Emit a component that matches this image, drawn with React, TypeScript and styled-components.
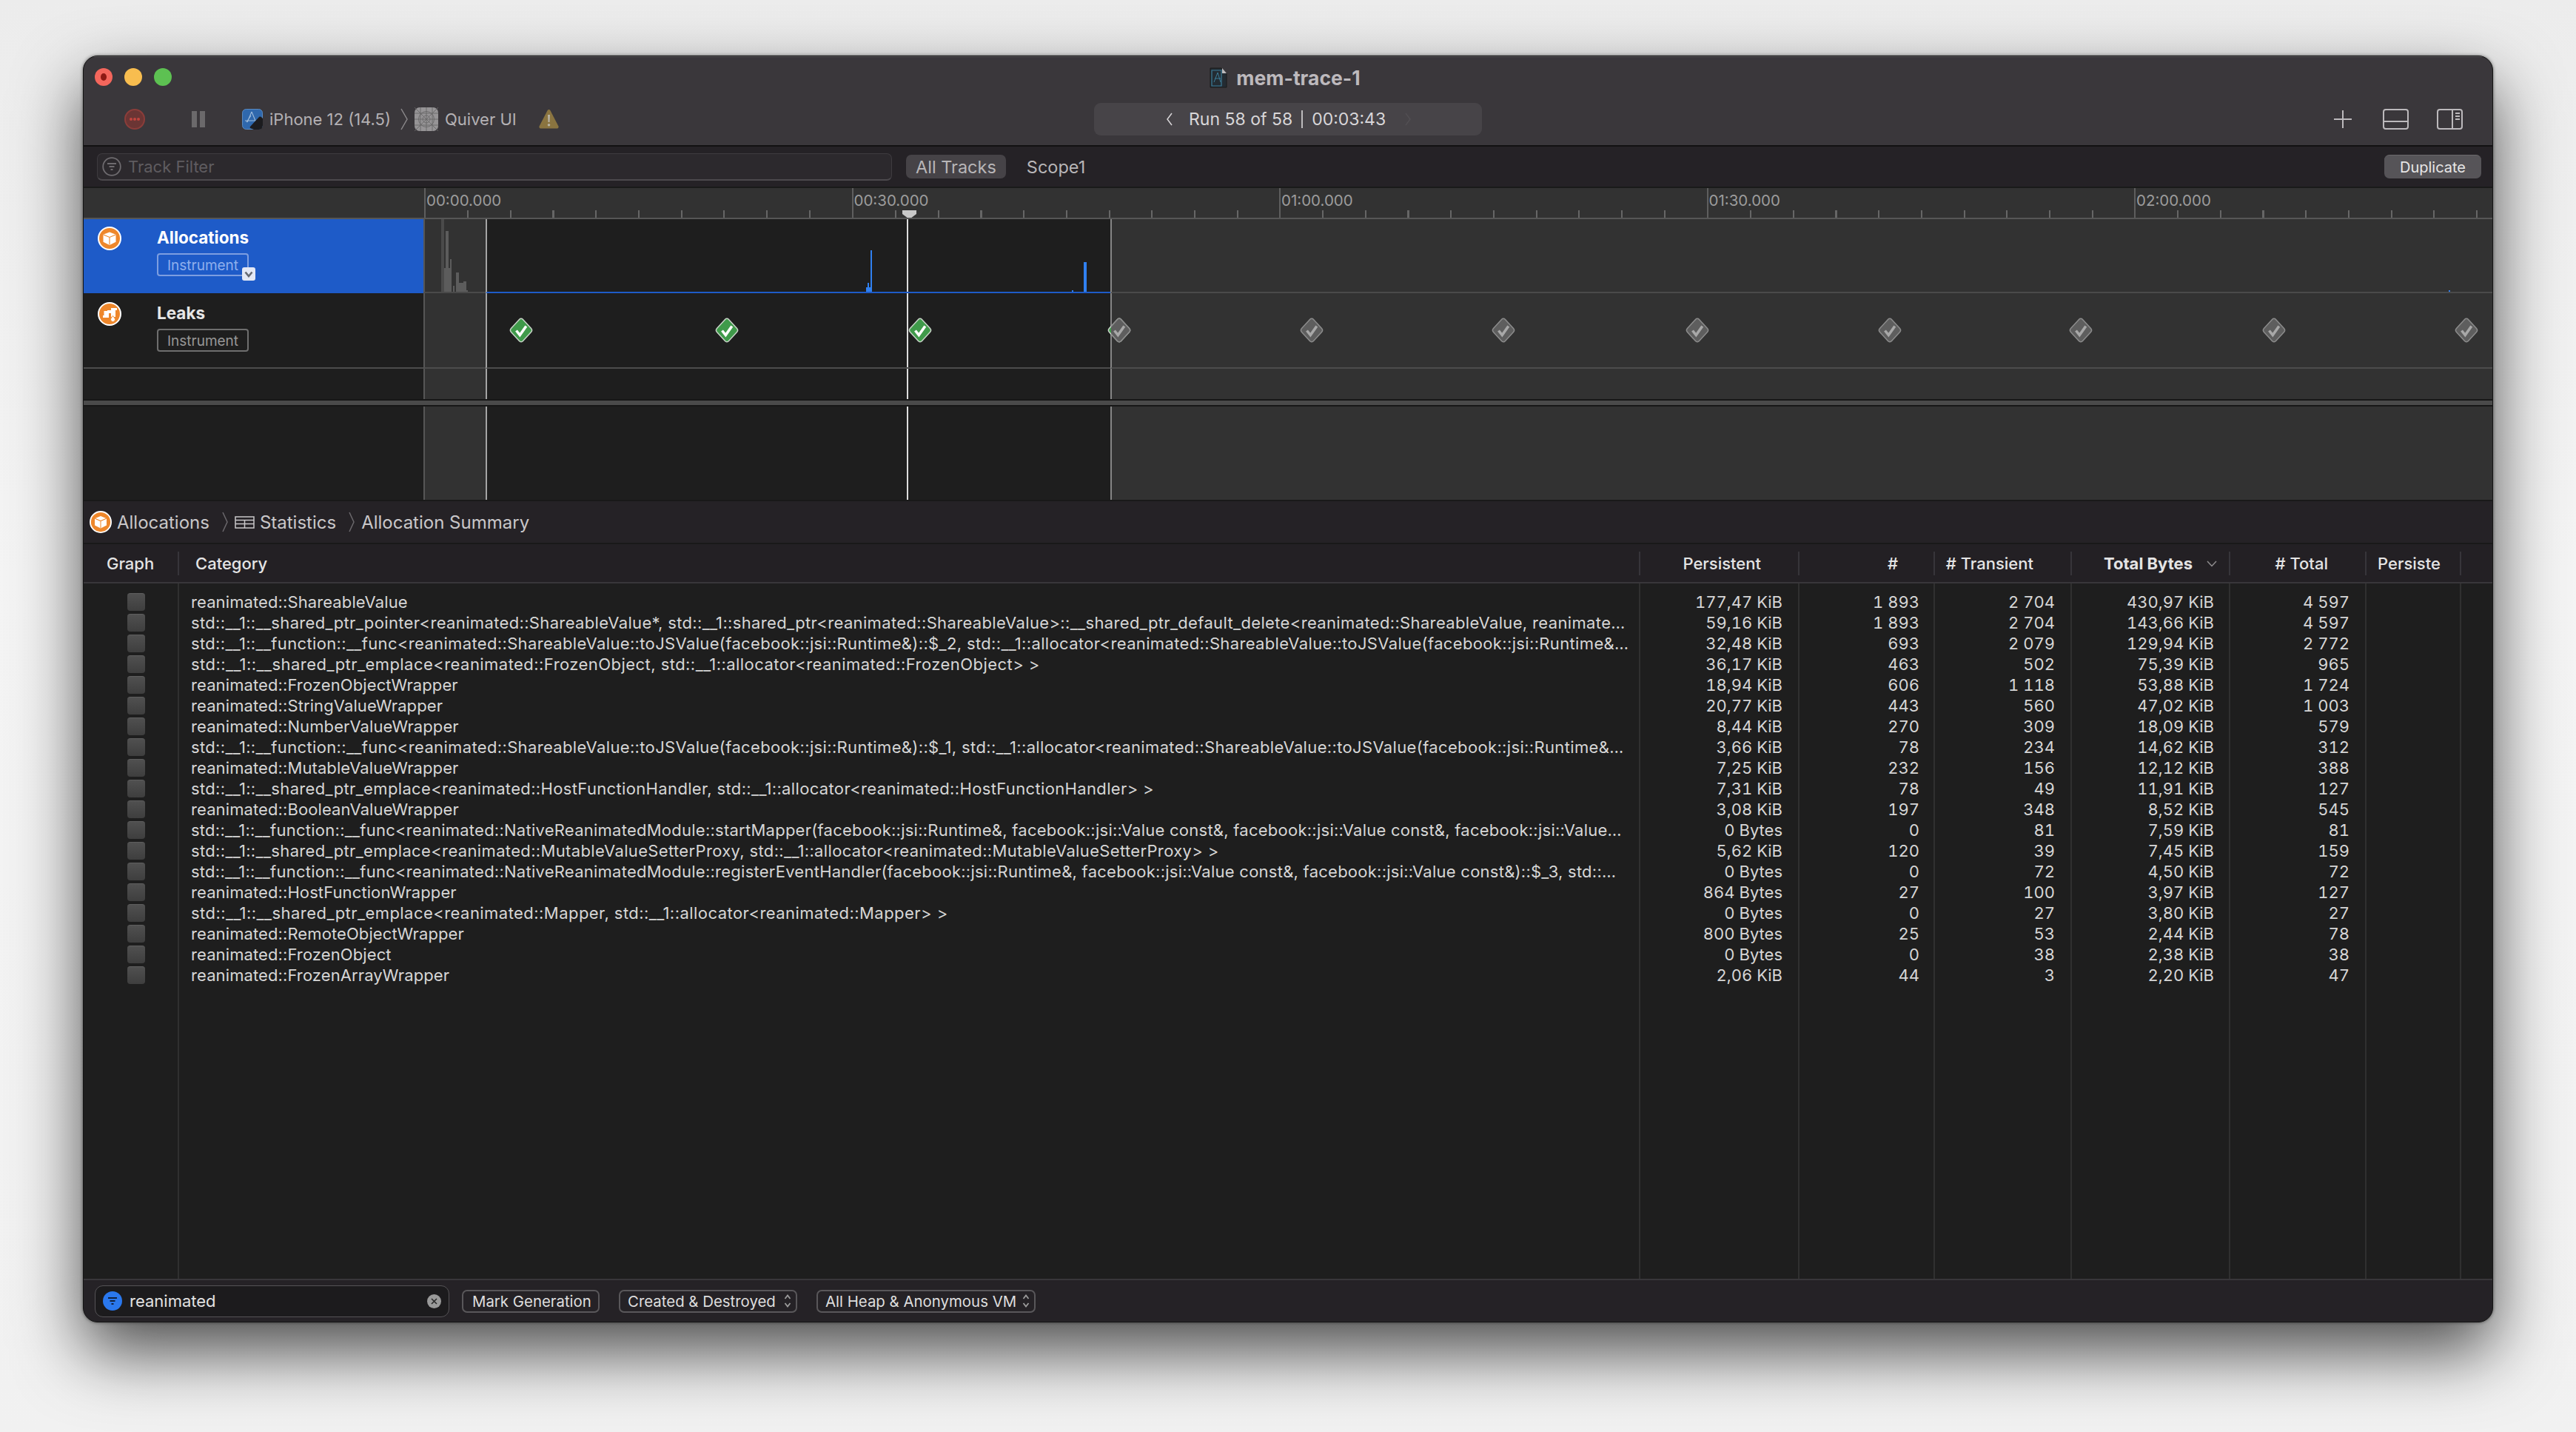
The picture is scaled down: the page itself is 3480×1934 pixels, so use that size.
import React from 'react';
import styled, { createGlobalStyle } from 'styled-components';

const GlobalStyle = createGlobalStyle`
  html, body {
    margin: 0;
    width: 3480px;
    height: 1934px;
    overflow: hidden;
    background: #f1f1f1;
    font-family: Inter, "Liberation Sans", sans-serif;
  }
  * { box-sizing: border-box; }
`;

// --- Window shell ---

const Page = styled.div`
  width: 3480px;
  height: 1934px;
  padding: 75px 112px;
  background: linear-gradient(#ececec, #f4f4f4 40%, #f1f1f1);
`;

const Window = styled.div`
  width: 3256px;
  height: 1711px;
  display: flex;
  flex-direction: column;
  border: 1px solid #141414;
  border-radius: 20px;
  overflow: hidden;
  background: #1e1e1e;
  box-shadow: 0 40px 90px rgba(0, 0, 0, 0.68), 0 0 4px rgba(0, 0, 0, 0.5);
  color: #d6d6d6;
  font-size: 22px;
`;

const TitleArea = styled.div`
  height: 122px;
  flex: none;
  background: #3a373b;
  border-bottom: 2px solid #121112;
  box-shadow: inset 0 1px 0 #5a585b;
`;

const TitleRow = styled.div`
  height: 57px;
  position: relative;
  display: flex;
  align-items: center;
  justify-content: center;
  gap: 12px;
  padding: 1px 8px 0 0;
`;

const Lights = styled.div`
  position: absolute;
  left: 15px;
  top: 16px;
  display: flex;
  gap: 16px;
`;

const Light = styled.span<{ $c: string }>`
  width: 24px;
  height: 24px;
  border-radius: 50%;
  background: ${(p) => p.$c};
  display: flex;
  align-items: center;
  justify-content: center;
`;

const LightDot = styled.span`
  width: 8px;
  height: 10px;
  border-radius: 50%;
  background: #8e1a14;
`;

const WindowTitle = styled.span`
  font-size: 26.5px;
  font-weight: 700;
  color: #bdb9bd;
`;

const Toolbar = styled.div`
  height: 56px;
  display: grid;
  grid-template-columns: 1fr 524px 1fr;
  align-items: center;
`;

const ToolLeft = styled.div`
  display: flex;
  align-items: center;
  padding-left: 55px;
  color: #b4b1b4;
`;

const ToolRight = styled.div`
  display: flex;
  align-items: center;
  justify-content: flex-end;
  padding-right: 40px;
  gap: 38px;
`;

const PlusWrap = styled.span`
  display: flex;
  margin-right: 4px;
`;

const PauseBars = styled.span`
  width: 18px;
  height: 22px;
  flex: none;
  margin: 0 50px 0 63px;
  border-left: 7px solid #6b696b;
  border-right: 7px solid #6b696b;
`;

const DeviceLabel = styled.span`
  margin-left: 9px;
  font-size: 22px;
  white-space: nowrap;
`;

const DeviceChevron = styled.span`
  display: flex;
  margin-left: 13px;
`;

const RunPill = styled.div`
  height: 44px;
  border-radius: 9px;
  background: #474448;
  display: flex;
  align-items: center;
  padding-left: 98px;
  color: #d8d6d8;
  font-size: 23px;
  white-space: nowrap;
`;

const RunText = styled.span`
  margin-left: 22px;
`;

const RunDivider = styled.span`
  width: 2px;
  height: 24px;
  background: #bdbbbd;
  margin: 0 12px;
`;

const RunNext = styled.span`
  margin-left: 26px;
  display: flex;
`;

// --- Filter strip ---

const FilterBar = styled.div`
  height: 56px;
  flex: none;
  display: flex;
  align-items: center;
  padding: 0 15px 0 18px;
  background: #252226;
  border-bottom: 2px solid #1a1a1a;
`;

const TrackField = styled.div`
  width: 1074px;
  height: 37px;
  display: flex;
  align-items: center;
  gap: 9px;
  padding-left: 6px;
  border: 1px solid #3e3b3f;
  border-bottom: 2px solid #4c494d;
  border-radius: 7px;
  background: #2c292d;
  color: #5f5c60;
  font-size: 22px;
`;

const ScopeTab = styled.span<{ $on?: boolean }>`
  height: 32px;
  padding: 0 13px;
  margin-left: ${(p) => (p.$on ? '19px' : '15px')};
  display: flex;
  align-items: center;
  border-radius: 7px;
  font-size: 23.5px;
  color: #b8b6b8;
  background: ${(p) => (p.$on ? '#464347' : 'transparent')};
`;

const DuplicateButton = styled.button`
  margin-left: auto;
  width: 131px;
  height: 32px;
  border: 0;
  border-top: 1px solid #6a686b;
  border-radius: 7px;
  background: #565458;
  color: #e6e6e6;
  font: inherit;
  font-size: 20px;
  padding: 0;
`;

// --- Timeline ---

const RulerRow = styled.div`
  height: 42px;
  flex: none;
  display: flex;
  position: relative;
  background: #323232;
  border-bottom: 2px solid #565656;
`;

const RulerSpacer = styled.div`
  width: 460px;
  flex: none;
`;

const RulerCell = styled.div`
  width: 577.5px;
  flex: none;
  position: relative;
  border-left: 2px solid #5e5e5e;
  padding: 5px 0 0 1px;
  font-size: 20.5px;
  line-height: 24px;
  color: #9c9c9c;
  &::after {
    content: '';
    position: absolute;
    left: 56px;
    right: 0;
    bottom: 0;
    height: 10px;
    background: repeating-linear-gradient(to right, #666 0 2px, transparent 2px 57.75px);
  }
`;

const PlayheadHandle = styled.span`
  position: absolute;
  left: 1106px;
  bottom: 0;
  width: 19px;
  height: 10px;
  background: #c8c8c8;
  clip-path: polygon(0 0, 100% 0, 100% 50%, 65% 100%, 35% 100%, 0 50%);
`;

const TrackRow = styled.div<{ $h: number }>`
  height: ${(p) => p.$h}px;
  flex: none;
  display: flex;
`;

const TrackLabel = styled.div<{ $selected?: boolean; $top?: number; $rule?: boolean }>`
  width: 459px;
  flex: none;
  display: flex;
  gap: 48px;
  padding: ${(p) => p.$top ?? 0}px 0 0 19px;
  background: ${(p) => (p.$selected ? '#1e5bc8' : '#1e1e1e')};
  border-bottom: ${(p) => (p.$rule ? '2px solid #4c4c4c' : '0')};
`;

const TrackText = styled.div`
  display: flex;
  flex-direction: column;
  gap: 8px;
  align-items: flex-start;
`;

const TrackName = styled.span<{ $selected?: boolean }>`
  height: 28px;
  line-height: 29px;
  font-size: 22.5px;
  font-weight: 700;
  color: ${(p) => (p.$selected ? '#ffffff' : '#e6e6e6')};
`;

const InstrumentBadge = styled.span<{ $selected?: boolean }>`
  width: 124px;
  height: 31px;
  position: relative;
  display: flex;
  align-items: center;
  justify-content: center;
  padding-top: 1px;
  border: 2px solid ${(p) => (p.$selected ? '#7d9ee0' : '#6e6e6e')};
  border-radius: 4px;
  font-size: 19px;
  color: ${(p) => (p.$selected ? '#8eafec' : '#969696')};
`;

const BadgeMenu = styled.span`
  position: absolute;
  right: -11px;
  bottom: -8px;
  width: 18px;
  height: 18px;
  border-radius: 3px;
  background: #e3e8f5;
  display: flex;
  align-items: center;
  justify-content: center;
`;

const Lane = styled.div`
  flex: 1;
  display: flex;
  position: relative;
  min-width: 0;
`;

const IdleBand = styled.div<{ $w?: number; $line: string; $rule?: string }>`
  width: ${(p) => (p.$w ? `${p.$w}px` : 'auto')};
  flex: ${(p) => (p.$w ? 'none' : '1')};
  background: #323232;
  border-left: 2px solid ${(p) => p.$line};
  border-bottom: ${(p) => (p.$rule ? `2px solid ${p.$rule}` : '0')};
`;

const ActiveBand = styled.div<{ $rule?: string }>`
  width: 844px;
  flex: none;
  position: relative;
  background: #1e1e1e;
  border-left: 2px solid #a4a4a4;
  border-bottom: ${(p) => (p.$rule ? `2px solid ${p.$rule}` : '0')};
`;

const Playhead = styled.span`
  position: absolute;
  left: 567px;
  top: 0;
  bottom: 0;
  width: 2px;
  background: #dddddd;
`;

const LaneChart = styled.svg`
  position: absolute;
  left: 1px;
  top: 0;
`;

const Diamond = styled.svg<{ $x: number; $clip?: boolean }>`
  position: absolute;
  left: ${(p) => p.$x - 572 - 16}px;
  top: 33px;
  ${(p) => (p.$clip ? 'clip-path: inset(0 0 0 5px);' : '')}
`;

const Splitter = styled.div`
  height: 10px;
  flex: none;
  background: #4a4a4a;
  border-top: 2px solid #171717;
  border-bottom: 2px solid #171717;
`;

// --- Detail pane ---

const Breadcrumbs = styled.div`
  height: 58px;
  flex: none;
  display: flex;
  align-items: center;
  padding-left: 8px;
  background: #252226;
  border-top: 2px solid #191919;
  font-size: 24px;
  color: #c9c7c9;
  white-space: nowrap;
`;

const Crumb = styled.span<{ $flush?: boolean }>`
  margin-left: ${(p) => (p.$flush ? 0 : 7)}px;
`;

const CrumbChevron = styled.span`
  display: flex;
  margin: 0 9px 0 17px;
`;

const TableHead = styled.div`
  height: 55px;
  flex: none;
  display: flex;
  align-items: center;
  background: #232024;
  border-top: 2px solid #191919;
  border-bottom: 2px solid #38363a;
  font-size: 22px;
  color: #e4e4e4;
`;

const HeadCell = styled.div<{ $w: number; $align?: string; $pad?: number; $bold?: boolean; $first?: boolean }>`
  width: ${(p) => p.$w}px;
  flex: none;
  height: 32px;
  line-height: 32px;
  position: relative;
  white-space: nowrap;
  text-align: ${(p) => p.$align ?? 'right'};
  padding: ${(p) => (p.$align === 'left' ? `0 0 0 ${p.$pad ?? 0}px` : `0 ${p.$pad ?? 0}px 0 0`)};
  border-left: ${(p) => (p.$first ? '0' : '2px solid #37353a')};
  font-weight: ${(p) => (p.$bold ? 700 : 500)};
`;

const SortMark = styled.svg`
  position: absolute;
  right: 16px;
  top: 12px;
`;

const TableBody = styled.div`
  flex: 1;
  min-height: 0;
  display: flex;
  background: #1e1e1e;
`;

const Column = styled.div<{ $w?: number; $first?: boolean }>`
  width: ${(p) => (p.$w ? `${p.$w}px` : 'auto')};
  flex: ${(p) => (p.$w ? 'none' : '1')};
  padding-top: 11px;
  border-left: ${(p) => (p.$first ? '0' : '2px solid #303030')};
`;

const GraphCell = styled.div`
  height: 28px;
  display: flex;
  align-items: center;
  padding-left: 59px;
`;

const GraphSwatch = styled.span`
  width: 24px;
  height: 24px;
  border-radius: 4px;
  border-top: 1px solid #5e5e5e;
  background: linear-gradient(#505050, #3e3e3e);
`;

const NameCell = styled.div<{ $track: number }>`
  height: 28px;
  line-height: 29px;
  padding-left: 16px;
  white-space: nowrap;
  overflow: hidden;
  font-size: 22px;
  letter-spacing: ${(p) => p.$track}px;
`;

const ValueCell = styled.div<{ $pad: number }>`
  height: 28px;
  line-height: 29px;
  text-align: right;
  white-space: nowrap;
  padding-right: ${(p) => p.$pad}px;
  font-size: 22px;
  font-variant-numeric: tabular-nums;
`;

// --- Bottom strip ---

const BottomBar = styled.div`
  height: 58px;
  flex: none;
  display: flex;
  align-items: center;
  padding: 0 0 0 15px;
  background: #252226;
  border-top: 2px solid #38363a;
`;

const SearchField = styled.div`
  width: 479px;
  height: 43px;
  display: flex;
  align-items: center;
  gap: 10px;
  padding: 0 10px;
  border: 1px solid #555356;
  border-radius: 11px;
  background: #1c1b1d;
  color: #e2e2e2;
  font-size: 22px;
`;

const ClearMark = styled.span`
  margin-left: auto;
  width: 19px;
  height: 19px;
  border-radius: 50%;
  background: #9a9a9a;
  display: flex;
  align-items: center;
  justify-content: center;
`;

const BarButton = styled.div<{ $w: number; $gap: number; $pad?: number }>`
  width: ${(p) => p.$w}px;
  height: 31px;
  margin-left: ${(p) => p.$gap}px;
  display: flex;
  align-items: center;
  justify-content: space-between;
  padding: 0 6px 0 ${(p) => p.$pad ?? 10}px;
  border: 2px solid #59575a;
  border-radius: 7px;
  font-size: 20.4px;
  color: #dedede;
  white-space: nowrap;
`;

// --- Drawings ---

const Glyph = styled.svg<{ $ml?: number }>`
  flex: none;
  margin-left: ${(p) => p.$ml ?? 0}px;
`;

const OrangeBadge: React.FC<{ kind: 'cube' | 'leak'; size?: number }> = ({ kind, size = 32 }) => (
  <Glyph width={size} height={size} viewBox="0 0 32 32">
    <circle cx="16" cy="16" r="15" fill="#ee872b" stroke="#fff" strokeWidth="2" />
    {kind === 'cube' ? (
      <>
        <path d="M16 7.500l8.500 3.300v10L16 25l-8.500-4.200v-10z" fill="#fff" />
        <path d="M7.800 11L16 14.500l8.200-3.500M16 14.500V24.600" fill="none" stroke="#ee872b" strokeWidth="1.100" />
      </>
    ) : (
      <>
        <path d="M14 8h12v3h-2v9h-6v-5h-3v6H7v-3h1.500v-6H13v-1h5v-3h-4z" fill="#fff" />
        <path d="M20.500 18.500c2 2.400 3 3.700 3 5a3 3 0 0 1-6 0c0-1.300 1-2.600 3-5z" fill="#fff" stroke="#ee872b" strokeWidth="1" />
      </>
    )}
  </Glyph>
);

const InstrumentsIcon: React.FC = () => (
  <Glyph width="28" height="28" viewBox="0 0 28 28">
    <rect x="0.500" y="0.500" width="27" height="27" rx="5" fill="#2f68ad" stroke="#5a8ac0" />
    <path d="M13 4L7 18M13 4l5 12M4 16h14M12 9l-6 9" fill="none" stroke="#9dbbdc" strokeWidth="1.100" />
    <path d="M11 24L23 11c1-.8 2.500-.6 3.200.2L28 13v9c0 3-2 6-5 6h-7l-5-2c-.5-.5-.5-1.400 0-2z" fill="#1c1c1f" />
  </Glyph>
);

const GridAppIcon: React.FC = () => (
  <Glyph $ml={9} width="32" height="32" viewBox="0 0 32 32">
    <rect width="32" height="32" rx="7" fill="#969496" />
    <g fill="none" stroke="#686668" strokeWidth="0.900">
      <path d="M0 8h32M0 24h32M8 0v32M24 0v32M16 0v32M0 16h32M0 0l32 32M32 0L0 32" />
      <circle cx="16" cy="16" r="5" />
      <circle cx="16" cy="16" r="10.500" />
    </g>
  </Glyph>
);

const WarningIcon: React.FC = () => (
  <Glyph $ml={30} width="27" height="26" viewBox="0 0 27 26">
    <path d="M13.500 0c1 0 1.600.6 2.200 1.700l10.600 20.600c.7 1.500 0 3.200-1.700 3.200H2.400C.7 25.500 0 23.800.7 22.300L11.300 1.700C11.900.6 12.500 0 13.500 0z" fill="#8a7440" />
    <path d="M12 7h3l-.5 10h-2zM13.500 19a1.800 1.800 0 1 1 0 3.600 1.800 1.800 0 0 1 0-3.600z" fill="#b9b4a5" />
  </Glyph>
);

const RecordIcon: React.FC = () => (
  <Glyph width="28" height="28" viewBox="0 0 28 28">
    <circle cx="14" cy="14" r="13" fill="#6b3534" stroke="#8b3d3a" strokeWidth="2" />
    <circle cx="9" cy="14" r="2" fill="#c2453f" />
    <circle cx="14" cy="14" r="2" fill="#c2453f" />
    <circle cx="19" cy="14" r="2" fill="#c2453f" />
  </Glyph>
);

const Chevron: React.FC<{ w?: number; h?: number; color?: string; left?: boolean }> = ({ w = 8, h = 28, color = '#6b686c', left }) => (
  <Glyph width={w} height={h} viewBox={`0 0 ${w} ${h}`}>
    <path d={left ? `M${w - 1} 1L1 ${h / 2}l${w - 2} ${h / 2 - 1}` : `M1 1l${w - 2} ${h / 2 - 1}L1 ${h - 1}`} fill="none" stroke={color} strokeWidth="1.500" />
  </Glyph>
);

const FilterGlyph: React.FC<{ active?: boolean }> = ({ active }) => (
  <Glyph width="26" height="26" viewBox="0 0 26 26">
    {active ? (
      <circle cx="13" cy="13" r="13" fill="#2a78ee" />
    ) : (
      <circle cx="13" cy="13" r="11.800" fill="none" stroke="#6e6b6f" strokeWidth="1.800" />
    )}
    <path d="M7 9h12M9.500 13h7M11.500 17h3" stroke={active ? '#10213f' : '#6e6b6f'} strokeWidth="2" />
  </Glyph>
);

const PlusIcon: React.FC = () => (
  <svg width="24" height="24" viewBox="0 0 24 24">
    <path d="M12 0v24M0 12h24" stroke="#bcb9bc" strokeWidth="2" />
  </svg>
);

const PanelIcon: React.FC<{ side?: boolean }> = ({ side }) => (
  <svg width="35" height="28" viewBox="0 0 35 28">
    <rect x="1" y="1" width="33" height="26" rx="3" fill="none" stroke="#bcb9bc" strokeWidth="2" />
    {side ? (
      <path d="M21 1v26M25 6h6M25 10h6M25 14h6" stroke="#bcb9bc" strokeWidth="2" />
    ) : (
      <path d="M1 17h33" stroke="#bcb9bc" strokeWidth="2" />
    )}
  </svg>
);

const TableGlyph: React.FC = () => (
  <Glyph width="27" height="17" viewBox="0 0 27 17">
    <path d="M1 1h25v15H1zM1 5.500h25M1 10.500h25M13.500 5.500V16" fill="none" stroke="#c9c7c9" strokeWidth="1.500" />
  </Glyph>
);

const DocIcon: React.FC = () => (
  <Glyph width="24" height="28" viewBox="0 0 24 28">
    <path d="M1 1h15l7 7v19H1z" fill="#232c33" stroke="#1b1b1b" />
    <path d="M17 1l6 7h-6z" fill="#bdbbbd" />
    <path d="M3 4h13v21H3z" fill="none" stroke="#3d7d99" strokeWidth="1.200" />
    <path d="M11 7l-5 13M11 7l4 13M7 15h8" fill="none" stroke="#3d7d99" strokeWidth="1" />
  </Glyph>
);

const UpDown: React.FC = () => (
  <Glyph width="10" height="20" viewBox="0 0 10 20">
    <path d="M1.500 7L5 2.500 8.500 7M1.500 13L5 17.500 8.500 13" fill="none" stroke="#9c9c9c" strokeWidth="1.800" />
  </Glyph>
);

const markX = [704, 982, 1243, 1512, 1772, 2031, 2293, 2553, 2811, 3072, 3332];

const CheckDiamond: React.FC<{ x: number; live?: boolean; clip?: boolean }> = ({ x, live, clip }) => (
  <Diamond $x={x} $clip={clip} width="32" height="34" viewBox="0 0 32 34">
    <path
      d="M13.500 2.400c1.400-1.500 3.600-1.500 5 0l11 12.200c1.300 1.400 1.300 3.400 0 4.800l-11 12.200c-1.400 1.500-3.600 1.500-5 0l-11-12.200c-1.300-1.400-1.300-3.400 0-4.800z"
      fill={live ? '#3f9a4a' : '#5e5e5e'}
      stroke={live ? '#c8d4c8' : '#8c8c8c'}
      strokeWidth="1.500"
    />
    <path d="M9.500 17.500l4.800 6 8.500-12" fill="none" stroke={live ? '#ffffff' : '#a8a8a8'} strokeWidth="3.600" />
  </Diamond>
);

// --- Data ---

const rows = [
  ['reanimated::ShareableValue', '177,47 KiB', '1 893', '2 704', '430,97 KiB', '4 597'],
  ['std::__1::__shared_ptr_pointer<reanimated::ShareableValue*, std::__1::shared_ptr<reanimated::ShareableValue>::__shared_ptr_default_delete<reanimated::ShareableValue, reanimate…', '59,16 KiB', '1 893', '2 704', '143,66 KiB', '4 597'],
  ['std::__1::__function::__func<reanimated::ShareableValue::toJSValue(facebook::jsi::Runtime&)::$_2, std::__1::allocator<reanimated::ShareableValue::toJSValue(facebook::jsi::Runtime&…', '32,48 KiB', '693', '2 079', '129,94 KiB', '2 772'],
  ['std::__1::__shared_ptr_emplace<reanimated::FrozenObject, std::__1::allocator<reanimated::FrozenObject> >', '36,17 KiB', '463', '502', '75,39 KiB', '965'],
  ['reanimated::FrozenObjectWrapper', '18,94 KiB', '606', '1 118', '53,88 KiB', '1 724'],
  ['reanimated::StringValueWrapper', '20,77 KiB', '443', '560', '47,02 KiB', '1 003'],
  ['reanimated::NumberValueWrapper', '8,44 KiB', '270', '309', '18,09 KiB', '579'],
  ['std::__1::__function::__func<reanimated::ShareableValue::toJSValue(facebook::jsi::Runtime&)::$_1, std::__1::allocator<reanimated::ShareableValue::toJSValue(facebook::jsi::Runtime&…', '3,66 KiB', '78', '234', '14,62 KiB', '312'],
  ['reanimated::MutableValueWrapper', '7,25 KiB', '232', '156', '12,12 KiB', '388'],
  ['std::__1::__shared_ptr_emplace<reanimated::HostFunctionHandler, std::__1::allocator<reanimated::HostFunctionHandler> >', '7,31 KiB', '78', '49', '11,91 KiB', '127'],
  ['reanimated::BooleanValueWrapper', '3,08 KiB', '197', '348', '8,52 KiB', '545'],
  ['std::__1::__function::__func<reanimated::NativeReanimatedModule::startMapper(facebook::jsi::Runtime&, facebook::jsi::Value const&, facebook::jsi::Value const&, facebook::jsi::Value…', '0 Bytes', '0', '81', '7,59 KiB', '81'],
  ['std::__1::__shared_ptr_emplace<reanimated::MutableValueSetterProxy, std::__1::allocator<reanimated::MutableValueSetterProxy> >', '5,62 KiB', '120', '39', '7,45 KiB', '159'],
  ['std::__1::__function::__func<reanimated::NativeReanimatedModule::registerEventHandler(facebook::jsi::Runtime&, facebook::jsi::Value const&, facebook::jsi::Value const&)::$_3, std::…', '0 Bytes', '0', '72', '4,50 KiB', '72'],
  ['reanimated::HostFunctionWrapper', '864 Bytes', '27', '100', '3,97 KiB', '127'],
  ['std::__1::__shared_ptr_emplace<reanimated::Mapper, std::__1::allocator<reanimated::Mapper> >', '0 Bytes', '0', '27', '3,80 KiB', '27'],
  ['reanimated::RemoteObjectWrapper', '800 Bytes', '25', '53', '2,44 KiB', '78'],
  ['reanimated::FrozenObject', '0 Bytes', '0', '38', '2,38 KiB', '38'],
  ['reanimated::FrozenArrayWrapper', '2,06 KiB', '44', '3', '2,20 KiB', '47'],
];

// std:: names carry many underscores and colons, which run wider in the original font
const nameTracking = (name: string) => {
  if (!name.startsWith('std')) return 0.1;
  if (name.includes('Native')) return 0.25;
  return name.length < 110 ? 0.45 : 0.35;
};

const valueColumns = [
  { w: 215, pad: 21 },
  { w: 183, pad: 19 },
  { w: 185, pad: 21 },
  { w: 214, pad: 20 },
  { w: 184, pad: 21 },
];

const rulerLabels = ['00:00.000', '00:30.000', '01:00.000', '01:30.000', '02:00.000'];

// --- Lane bands, shared by every timeline row ---

const Bands: React.FC<{ rule?: string; activeRule?: string; children?: React.ReactNode }> = ({ rule, activeRule, children }) => (
  <Lane>
    <IdleBand $w={84} $line="#565656" $rule={rule} />
    <ActiveBand $rule={activeRule ?? rule}>
      <Playhead />
    </ActiveBand>
    <IdleBand $line="#858585" $rule={rule} />
    {children}
  </Lane>
);

const App: React.FC = () => (
  <Page>
    <GlobalStyle />
    <Window>
      <TitleArea>
        <TitleRow>
          <Lights>
            <Light $c="#f4665c"><LightDot /></Light>
            <Light $c="#f8bd4f" />
            <Light $c="#5dc152" />
          </Lights>
          <DocIcon />
          <WindowTitle>mem-trace-1</WindowTitle>
        </TitleRow>
        <Toolbar>
          <ToolLeft>
            <RecordIcon />
            <PauseBars />
            <InstrumentsIcon />
            <DeviceLabel>iPhone 12 (14.5)</DeviceLabel>
            <DeviceChevron><Chevron w={10} h={30} color="#8a888a" /></DeviceChevron>
            <GridAppIcon />
            <DeviceLabel>Quiver UI</DeviceLabel>
            <WarningIcon />
          </ToolLeft>
          <RunPill>
            <Chevron w={8} h={18} color="#d8d6d8" left />
            <RunText>Run 58 of 58</RunText>
            <RunDivider />
            <span>00:03:43</span>
            <RunNext><Chevron w={8} h={18} color="#524f53" /></RunNext>
          </RunPill>
          <ToolRight>
            <PlusWrap><PlusIcon /></PlusWrap>
            <PanelIcon />
            <PanelIcon side />
          </ToolRight>
        </Toolbar>
      </TitleArea>

      <FilterBar>
        <TrackField>
          <FilterGlyph />
          Track Filter
        </TrackField>
        <ScopeTab $on>All Tracks</ScopeTab>
        <ScopeTab>Scope1</ScopeTab>
        <DuplicateButton>Duplicate</DuplicateButton>
      </FilterBar>

      <RulerRow>
        <RulerSpacer />
        {rulerLabels.map((t) => (
          <RulerCell key={t}>{t}</RulerCell>
        ))}
        <RulerCell />
        <PlayheadHandle />
      </RulerRow>

      <TrackRow $h={100}>
        <TrackLabel $selected $top={10}>
          <OrangeBadge kind="cube" />
          <TrackText>
            <TrackName $selected>Allocations</TrackName>
            <InstrumentBadge $selected>
              Instrument
              <BadgeMenu>
                <svg width="12" height="9" viewBox="0 0 12 9">
                  <path d="M1.500 1.500L6 7l4.500-5.500" fill="none" stroke="#666a72" strokeWidth="2.600" />
                </svg>
              </BadgeMenu>
            </InstrumentBadge>
          </TrackText>
        </TrackLabel>
        <Bands rule="#4a4a4a" activeRule="#1e5bc8">
          <LaneChart width="2795" height="98" viewBox="0 0 2795 98">
            <path d="M23 0h4v98h-4z" fill="#4a4a4a" />
            <path d="M29 16h4v82h-4zM27 66h8v32h-8zM35 54h2v44h-2zM39 90h2v8h-2zM43 72h4v26h-4zM47 86h6v12h-6zM53 84h4v14h-4zM57 96h2v2h-2z" fill="#5c5c5c" />
            <path d="M597 92h8v6h-8zM599 86h2v6h-2zM603 42h2v50h-2zM875 96h2v2h-2zM891 58h4v40h-4zM2735 96h2v2h-2z" fill="#3080f0" />
          </LaneChart>
        </Bands>
      </TrackRow>

      <TrackRow $h={102}>
        <TrackLabel $top={12} $rule>
          <OrangeBadge kind="leak" />
          <TrackText>
            <TrackName>Leaks</TrackName>
            <InstrumentBadge>Instrument</InstrumentBadge>
          </TrackText>
        </TrackLabel>
        <Bands rule="#4c4c4c">
          {markX.slice(0, 4).map((x) => (
            <CheckDiamond key={x} x={x} live />
          ))}
          {markX.slice(3).map((x) => (
            <CheckDiamond key={x} x={x} clip={x === 1512} />
          ))}
        </Bands>
      </TrackRow>

      <TrackRow $h={41}>
        <TrackLabel />
        <Bands />
      </TrackRow>

      <Splitter />

      <TrackRow $h={126}>
        <TrackLabel />
        <Bands />
      </TrackRow>

      <Breadcrumbs>
        <OrangeBadge kind="cube" size={30} />
        <Crumb>Allocations</Crumb>
        <CrumbChevron><Chevron w={8} h={28} /></CrumbChevron>
        <TableGlyph />
        <Crumb>Statistics</Crumb>
        <CrumbChevron><Chevron w={8} h={28} /></CrumbChevron>
        <Crumb $flush>Allocation Summary</Crumb>
      </Breadcrumbs>

      <TableHead>
        <HeadCell $first $w={127} $align="left" $pad={31}>Graph</HeadCell>
        <HeadCell $w={1974} $align="left" $pad={22}>Category</HeadCell>
        <HeadCell $w={215} $pad={50}>Persistent</HeadCell>
        <HeadCell $w={183} $pad={48}>#</HeadCell>
        <HeadCell $w={185} $pad={50}># Transient</HeadCell>
        <HeadCell $w={214} $pad={49} $bold>
          Total Bytes
          <SortMark width="14" height="9" viewBox="0 0 14 9">
            <path d="M1 1l6 6.500L13 1" fill="none" stroke="#8c8a8c" strokeWidth="1.500" />
          </SortMark>
        </HeadCell>
        <HeadCell $w={184} $pad={50}># Total</HeadCell>
        <HeadCell $w={128} $align="left" $pad={15}>Persiste</HeadCell>
        <HeadCell $w={44} />
      </TableHead>

      <TableBody>
        <Column $first $w={127}>
          {rows.map((r) => (
            <GraphCell key={r[0]}>
              <GraphSwatch />
            </GraphCell>
          ))}
        </Column>
        <Column $w={1974}>
          {rows.map((r) => (
            <NameCell key={r[0]} $track={nameTracking(r[0])}>{r[0]}</NameCell>
          ))}
        </Column>
        {valueColumns.map((c, i) => (
          <Column key={i} $w={c.w}>
            {rows.map((r) => (
              <ValueCell key={r[0]} $pad={c.pad}>{r[i + 1]}</ValueCell>
            ))}
          </Column>
        ))}
        <Column $w={128} />
        <Column />
      </TableBody>

      <BottomBar>
        <SearchField>
          <FilterGlyph active />
          reanimated
          <ClearMark>
            <svg width="9" height="9" viewBox="0 0 9 9">
              <path d="M1 1l7 7M8 1L1 8" stroke="#2a2a2a" strokeWidth="1.600" />
            </svg>
          </ClearMark>
        </SearchField>
        <BarButton $w={186} $gap={17} $pad={12}>Mark Generation</BarButton>
        <BarButton $w={241} $gap={26}>Created &amp; Destroyed<UpDown /></BarButton>
        <BarButton $w={296} $gap={26}>All Heap &amp; Anonymous VM<UpDown /></BarButton>
      </BottomBar>
    </Window>
  </Page>
);

export default App;
